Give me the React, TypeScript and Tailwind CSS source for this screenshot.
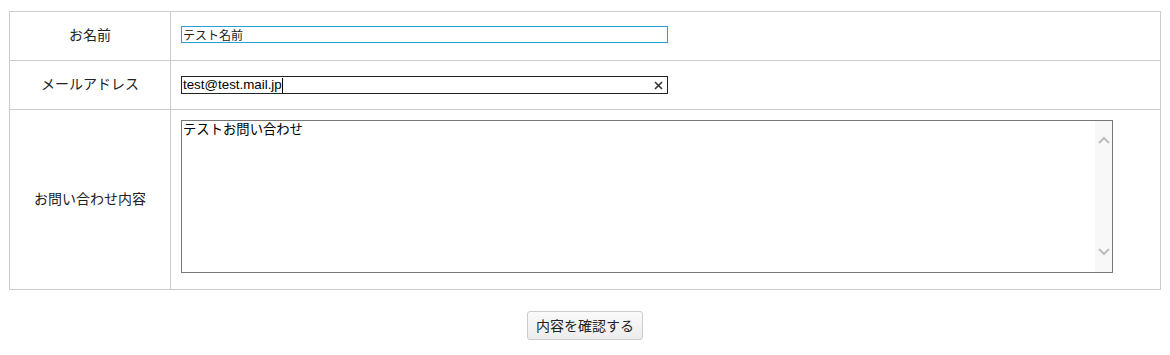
import React from "react";

const jp = "font-['Noto_Sans_CJK_JP','Noto_Sans',sans-serif]";

const Label = ({ children }: { children: React.ReactNode }) => (
  <div
    className={`flex items-center justify-center border-r border-[#cccccc] pb-[4px] text-[14px] leading-[18px] text-[#222] ${jp}`}
  >
    {children}
  </div>
);

const App = () => {
  return (
    <div className="bg-white w-[1170px] h-[355px] pl-[9px] pt-[11px]">
      <div className="w-[1152px] border border-[#cccccc]">
        {/* name */}
        <div className="grid grid-cols-[161px_1fr] h-[48px]">
          <Label>お名前</Label>
          <div className="pl-[10px] pt-[14px]">
            <div
              className={`w-[487px] h-[17px] border border-[#2a9fd6] text-[12px] leading-[15px] text-[#222] pl-px ${jp}`}
            >
              テスト名前
            </div>
          </div>
        </div>

        {/* mail */}
        <div className="grid grid-cols-[161px_1fr] h-[49px] border-t border-[#cccccc]">
          <Label>メールアドレス</Label>
          <div className="pl-[10px] pt-[15px]">
            <div className="flex items-center w-[487px] h-[18px] border border-[#222]">
              <span className="pl-px text-[13.333px] leading-[16px] text-black font-['Liberation_Sans',Arial,sans-serif]">
                test@test.mail.jp
              </span>
              <span className="w-px h-[15px] bg-black" />
              <span className="ml-auto mr-[4px] flex items-center">
                <svg width="9" height="9" viewBox="0 0 9 9">
                  <path
                    d="M1 1L8 8M8 1L1 8"
                    stroke="#333"
                    strokeWidth="1.6"
                    fill="none"
                  />
                </svg>
              </span>
            </div>
          </div>
        </div>

        {/* inquiry */}
        <div className="grid grid-cols-[161px_1fr] h-[180px] border-t border-[#cccccc]">
          <Label>お問い合わせ内容</Label>
          <div className="pl-[10px] pt-[10px]">
            <div className="flex w-[932px] h-[153px] border border-[#767676]">
              <div
                className={`flex-1 pl-px text-[13.333px] leading-[16px] text-black ${jp}`}
              >
                テストお問い合わせ
              </div>
              <div className="w-[17px] bg-[#f8f8f8] flex flex-col items-center justify-between pt-[15px] pb-[16px]">
                <svg width="12" height="8" viewBox="0 0 12 8">
                  <path
                    d="M1 7L6 2L11 7"
                    stroke="#bdbdbd"
                    strokeWidth="2"
                    fill="none"
                  />
                </svg>
                <svg width="12" height="8" viewBox="0 0 12 8">
                  <path
                    d="M1 1L6 6L11 1"
                    stroke="#bdbdbd"
                    strokeWidth="2"
                    fill="none"
                  />
                </svg>
              </div>
            </div>
          </div>
        </div>
      </div>

      <div className="flex justify-center w-[1152px] mt-[21px]">
        <button
          className={`w-[116px] h-[29px] rounded-[3px] border border-[#cccccc] bg-gradient-to-b from-[#fafafa] to-[#ececec] text-[14px] text-[#222] ${jp}`}
        >
          内容を確認する
        </button>
      </div>
    </div>
  );
};

export default App;
